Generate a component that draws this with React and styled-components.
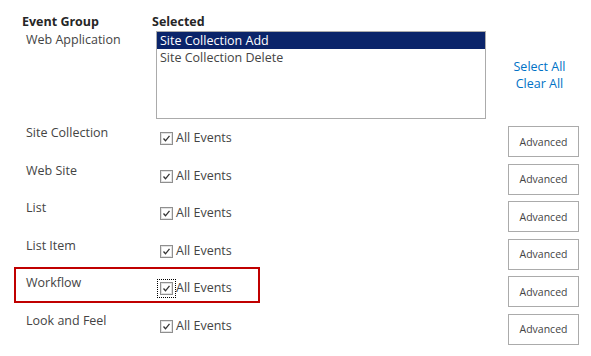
import styled, { createGlobalStyle } from "styled-components";

const GlobalStyle = createGlobalStyle`
  body {
    margin: 0;
    background: #fff;
    font-family: "Open Sans", "Liberation Sans", sans-serif;
    color: #444;
  }
`;

const groups = [
  { name: "Site Collection" },
  { name: "Web Site" },
  { name: "List" },
  { name: "List Item" },
  { name: "Workflow", highlight: true },
  { name: "Look and Feel" },
];

function CheckIcon() {
  return (
    <svg width="13" height="13" viewBox="0 0 13 13">
      <rect x="0.5" y="0.5" width="12" height="12" fill="#f4f4f4" stroke="#8f8f8f" />
      <rect x="1.5" y="1.5" width="10" height="10" fill="#fff" stroke="#e2e2e2" />
      <path d="M3.5 6.5 L5.5 8.8 L9.5 3.8" fill="none" stroke="#333" strokeWidth="1.3" />
    </svg>
  );
}

export default function App() {
  return (
    <>
      <GlobalStyle />
      <Page>
        <HeaderRow>
          <HeadCell width={130}>Event Group</HeadCell>
          <HeadCell>Selected</HeadCell>
        </HeaderRow>

        <WebAppRow>
          <GroupLabel>Web Application</GroupLabel>
          <ListBox>
            <ListItem selected>Site Collection Add</ListItem>
            <ListItem>Site Collection Delete</ListItem>
          </ListBox>
          <SideLinks>
            <TextLink href="#">Select All</TextLink>
            <TextLink href="#">Clear All</TextLink>
          </SideLinks>
        </WebAppRow>

        <Rows>
          {groups.map((g) => (
            <EventRow key={g.name}>
              {g.highlight && <Highlight />}
              <GroupLabel>{g.name}</GroupLabel>
              <CheckLabel>
                <CheckBox focused={g.highlight}>
                  <CheckIcon />
                </CheckBox>
                All Events
              </CheckLabel>
              <AdvancedButton>Advanced</AdvancedButton>
            </EventRow>
          ))}
        </Rows>
      </Page>
    </>
  );
}

const Page = styled.div`
  padding: 14px 12px 0 14px;
  font-size: 12.5px;
`;

const HeaderRow = styled.div`
  display: flex;
  padding-left: 8px;
  line-height: 16px;
`;

const HeadCell = styled.div`
  width: ${({ width }) => (width ? `${width}px` : "auto")};
  font-weight: 700;
  color: #262626;
`;

const WebAppRow = styled.div`
  display: flex;
  align-items: flex-start;
  margin-top: 1px;
`;

const GroupLabel = styled.div`
  width: 134px;
  padding-left: 12px;
  flex-shrink: 0;
  line-height: 18px;
  margin-top: 0;
  white-space: nowrap;
`;

const ListBox = styled.div`
  width: 328px;
  height: 86px;
  border: 1px solid #ababab;
  margin-left: -4px;
`;

const ListItem = styled.div`
  height: 17px;
  line-height: 17px;
  padding-left: 3px;
  background: ${({ selected }) => (selected ? "#0a246a" : "transparent")};
  color: ${({ selected }) => (selected ? "#fff" : "#444")};
`;

const SideLinks = styled.div`
  flex: 1;
  display: flex;
  flex-direction: column;
  align-items: center;
  padding: 27px 0 0 14px;
  line-height: 17px;
`;

const TextLink = styled.a`
  color: #0072c6;
  text-decoration: none;
`;

const Rows = styled.div`
  margin-top: 7px;
`;

const EventRow = styled.div`
  position: relative;
  display: flex;
  align-items: flex-start;
  height: 37.6px;

  & > ${GroupLabel} {
    margin-top: -2px;
  }
`;

const Highlight = styled.div`
  position: absolute;
  left: 0;
  top: -9px;
  width: 246px;
  height: 36px;
  box-sizing: border-box;
  border: 2px solid #c00000;
  pointer-events: none;
`;

const CheckLabel = styled.label`
  display: flex;
  align-items: center;
  margin-top: 3px;
  line-height: 18px;
`;

const CheckBox = styled.span`
  display: inline-flex;
  margin: 1px 3px 0 0;
  outline: ${({ focused }) => (focused ? "1px dotted #000" : "none")};
  outline-offset: 2px;
`;

const AdvancedButton = styled.button`
  margin-left: auto;
  width: 71px;
  height: 31px;
  background: #fff;
  border: 1px solid #ababab;
  font-family: "Open Sans", "Liberation Sans", sans-serif;
  font-size: 10.5px;
  color: #444;
  padding: 0;
`;
